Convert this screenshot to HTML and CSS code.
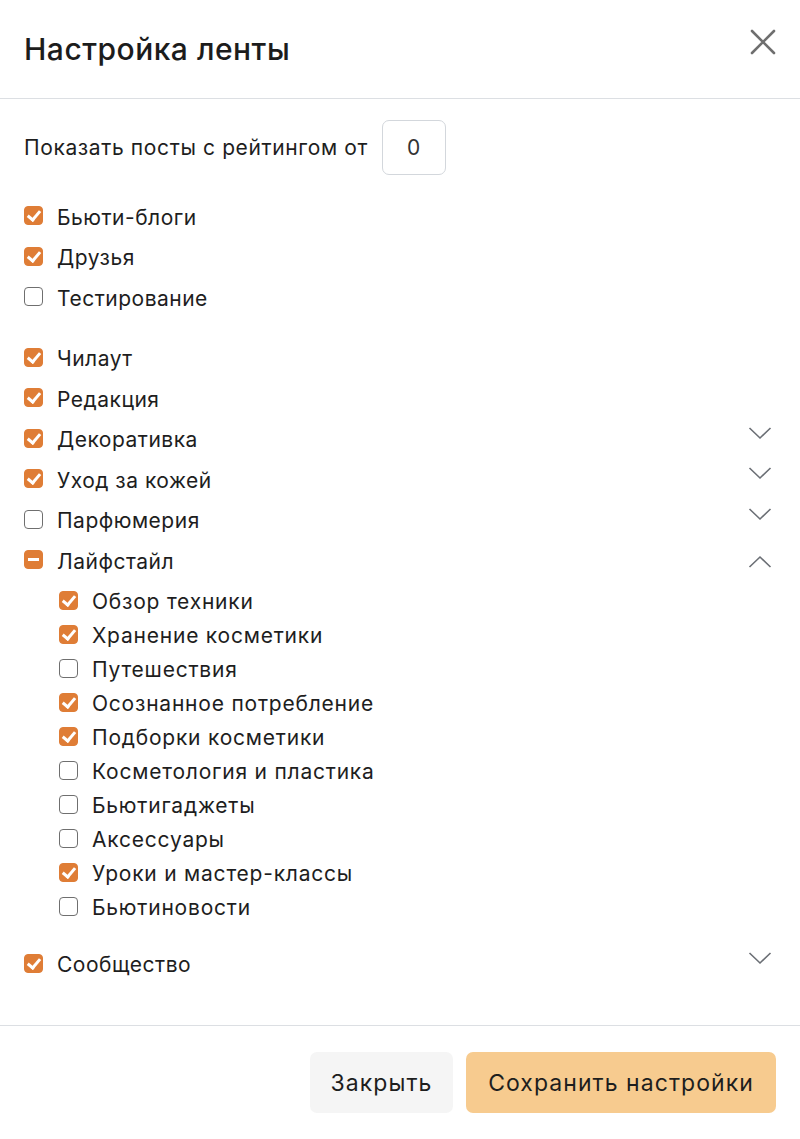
FILE: index.html
```html
<!DOCTYPE html>
<html lang="ru">
<head>
<meta charset="utf-8">
<title>Настройка ленты</title>
<link rel="stylesheet" href="styles.css">
</head>
<body>
<div class="modal">
  <div class="modal-header">
    <h1 class="modal-title">Настройка ленты</h1>
    <button class="close-btn" aria-label="Закрыть">
      <svg width="26" height="26" viewBox="0 0 26 26"><path d="M2 2 L24 24 M24 2 L2 24" stroke="#6f6f6f" stroke-width="2.6" stroke-linecap="round" fill="none"/></svg>
    </button>
  </div>
  <div class="modal-body">
    <div class="rating-row">
      <span class="rating-label">Показать посты с рейтингом от</span>
      <div class="rating-input">0</div>
    </div>

    <div class="group">
      <div class="row"><span class="cb checked"></span><span class="label">Бьюти-блоги</span></div>
      <div class="row"><span class="cb checked"></span><span class="label">Друзья</span></div>
      <div class="row"><span class="cb"></span><span class="label">Тестирование</span></div>
    </div>

    <div class="group">
      <div class="row"><span class="cb checked"></span><span class="label">Чилаут</span></div>
      <div class="row"><span class="cb checked"></span><span class="label">Редакция</span></div>
      <div class="row"><span class="cb checked"></span><span class="label">Декоративка</span><span class="chev down"></span></div>
      <div class="row"><span class="cb checked"></span><span class="label">Уход за кожей</span><span class="chev down"></span></div>
      <div class="row"><span class="cb"></span><span class="label">Парфюмерия</span><span class="chev down"></span></div>
      <div class="row"><span class="cb partial"></span><span class="label">Лайфстайл</span><span class="chev up"></span></div>
      <div class="sublist">
        <div class="subrow"><span class="cb checked"></span><span class="label">Обзор техники</span></div>
        <div class="subrow"><span class="cb checked"></span><span class="label">Хранение косметики</span></div>
        <div class="subrow"><span class="cb"></span><span class="label">Путешествия</span></div>
        <div class="subrow"><span class="cb checked"></span><span class="label">Осознанное потребление</span></div>
        <div class="subrow"><span class="cb checked"></span><span class="label">Подборки косметики</span></div>
        <div class="subrow"><span class="cb"></span><span class="label">Косметология и пластика</span></div>
        <div class="subrow"><span class="cb"></span><span class="label">Бьютигаджеты</span></div>
        <div class="subrow"><span class="cb"></span><span class="label">Аксессуары</span></div>
        <div class="subrow"><span class="cb checked"></span><span class="label">Уроки и мастер-классы</span></div>
        <div class="subrow"><span class="cb"></span><span class="label">Бьютиновости</span></div>
      </div>
      <div class="row community"><span class="cb checked"></span><span class="label">Сообщество</span><span class="chev down"></span></div>
    </div>
  </div>
  <div class="modal-footer">
    <button class="btn btn-light">Закрыть</button>
    <button class="btn btn-primary">Сохранить настройки</button>
  </div>
</div>
</body>
</html>
```
FILE: styles.css
```css
* { box-sizing: border-box; }
html, body { margin: 0; padding: 0; background: #fff; }
body {
  font-family: Inter, "Noto Sans", "DejaVu Sans", sans-serif;
  color: #1e1e1e;
}
.modal { width: 800px; }
.modal-header {
  height: 99px;
  padding: 0 24px;
  display: flex;
  align-items: center;
  justify-content: space-between;
  border-bottom: 1px solid #dcdfe3;
}
.modal-title {
  margin: 0;
  font-size: 30px;
  font-weight: 500;
  letter-spacing: 0.5px;
  color: #1c1c1c;
  padding-top: 0;
}
.close-btn {
  border: 0; background: none; padding: 0; margin-right: 0;
  width: 26px; height: 26px; display: flex; margin-top: -14px;
}
.modal-body { padding: 21px 24px 40px; }
.rating-row {
  display: flex;
  align-items: center;
  gap: 14px;
  font-size: 21px;
  letter-spacing: 0.62px;
}
.rating-input {
  width: 64px; height: 55px;
  border: 1px solid #d3d7dc;
  border-radius: 7px;
  display: flex; align-items: center; justify-content: center;
  font-size: 21px; color: #333;
}
.group { margin-top: 22px; }
.group + .group { margin-top: 20px; }
.row {
  height: 40.5px;
  display: flex;
  align-items: center;
  font-size: 21px;
  letter-spacing: 0.5px;
}
.row .label { margin-left: 14px; flex: 1; }
.sublist { padding-left: 35px; margin-top: 3px; }
.subrow {
  height: 34px;
  display: flex; align-items: center;
  font-size: 21px;
  letter-spacing: 0.78px;
}
.subrow .label { margin-left: 14px; }
.row.community { margin-top: 20px; }
.cb {
  width: 19px; height: 19px;
  border: 1.5px solid #6f6f6f;
  border-radius: 4px;
  flex: none;
  position: relative;
  background: #fff;
  margin-top: -3px;
}
.cb.checked, .cb.partial {
  background: #df7d36;
  border-color: #df7d36;
}
.cb.checked::after {
  content: "";
  position: absolute;
  left: 5px; top: 1px;
  width: 5px; height: 10px;
  border: solid #fff;
  border-width: 0 3px 3px 0;
  transform: rotate(40deg);
}
.cb.partial::after {
  content: "";
  position: absolute;
  left: 3px; right: 3px; top: 7px;
  height: 2.5px;
  background: #fff;
}
.chev {
  width: 24px; height: 14px; flex: none; margin-right: 4px;
  background-repeat: no-repeat;
}
.chev.down {
  background-image: url("data:image/svg+xml;utf8,<svg xmlns='http://www.w3.org/2000/svg' width='24' height='14' viewBox='0 0 24 14'><path d='M1.5 2 L12 12 L22.5 2' fill='none' stroke='%236b6f75' stroke-width='1.6'/></svg>");
  margin-top: -14px;
}
.chev.up {
  background-image: url("data:image/svg+xml;utf8,<svg xmlns='http://www.w3.org/2000/svg' width='24' height='14' viewBox='0 0 24 14'><path d='M1.5 12 L12 2 L22.5 12' fill='none' stroke='%236b6f75' stroke-width='1.6'/></svg>");
  margin-top: 2px;
}
.modal-footer {
  border-top: 1px solid #dcdfe3;
  padding: 26px 24px 26px;
  display: flex;
  justify-content: flex-end;
  gap: 13px;
}
.btn {
  height: 61px;
  border: 0;
  border-radius: 7px;
  font-family: inherit;
  font-size: 23px;
  letter-spacing: 1.05px;
  color: #1e1e1e;
  padding: 0;
}
.btn-light { background: #f5f5f5; width: 143px; }
.btn-primary { background: #f7cb8f; width: 310px; }
```
